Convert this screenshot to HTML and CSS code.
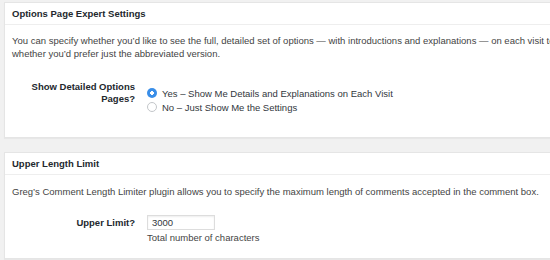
FILE: index.html
```html
<!DOCTYPE html>
<html>
<head>
<meta charset="utf-8">
<link rel="stylesheet" href="styles.css">
</head>
<body>
<div class="page">
  <section class="box box-first">
    <h2 class="box-title">Options Page Expert Settings</h2>
    <div class="box-body">
      <p class="intro">You can specify whether you’d like to see the full, detailed set of options — with introductions and explanations — on each visit to<br>whether you’d prefer just the abbreviated version.</p>
      <div class="row">
        <div class="row-label">Show Detailed Options Pages?</div>
        <div class="row-field radios">
          <label class="radio-line"><span class="radio radio-on"></span>Yes – Show Me Details and Explanations on Each Visit</label>
          <label class="radio-line"><span class="radio"></span>No – Just Show Me the Settings</label>
        </div>
      </div>
    </div>
  </section>
  <section class="box box-second">
    <h2 class="box-title">Upper Length Limit</h2>
    <div class="box-body">
      <p class="intro intro-second">Greg’s Comment Length Limiter plugin allows you to specify the maximum length of comments accepted in the comment box.</p>
      <div class="row row-limit">
        <div class="row-label label-limit">Upper Limit?</div>
        <div class="row-field">
          <div class="text-input">3000</div>
          <div class="hint">Total number of characters</div>
        </div>
      </div>
    </div>
  </section>
</div>
</body>
</html>
```

FILE: styles.css
```css
html, body {
  margin: 0;
  padding: 0;
  background: #f1f1f1;
}
body {
  width: 550px;
  height: 260px;
  overflow: hidden;
  font-family: "Liberation Sans", Arial, sans-serif;
  font-size: 9.5px;
  color: #444;
}
.page {
  padding: 2px 0 0 4px;
}
.box {
  width: 600px;
  background: #fff;
  border: 1px solid #e5e5e5;
  box-shadow: 0 1px 1px rgba(0,0,0,.04);
}
.box-second {
  margin-top: 14px;
}
.box-title {
  margin: 0;
  height: 21px;
  line-height: 21px;
  padding-left: 7px;
  font-size: 9.5px;
  font-weight: bold;
  color: #23282d;
  border-bottom: 1px solid #eee;
}
.box-body {
  padding: 0 7px 23px;
}
.box-second .box-body {
  padding-bottom: 14px;
}
.intro {
  margin: 9px 0 0;
  line-height: 13px;
}
.intro-second {
  margin-top: 10px;
}
.row {
  display: grid;
  grid-template-columns: 123px auto;
  column-gap: 12px;
  margin-top: 21px;
}
.row-limit {
  margin-top: 17px;
}
.row-label {
  text-align: right;
  font-weight: bold;
  color: #23282d;
  line-height: 12px;
  padding-left: 18px;
}
.label-limit {
  padding-top: 2px;
}
.radios {
  padding-top: 5px;
  display: flex;
  flex-direction: column;
}
.radio-line {
  display: flex;
  align-items: center;
  height: 14px;
  color: #32373c;
}
.radio {
  width: 10px;
  height: 10px;
  box-sizing: border-box;
  border-radius: 50%;
  border: 1px solid #c3c6c9;
  background: #fff;
  margin-right: 5px;
  flex: none;
}
.radio-on {
  border: none;
  background: radial-gradient(circle, #fff 0 1.6px, #3a8ee8 2.1px);
}
.text-input {
  width: 68px;
  height: 15px;
  box-sizing: border-box;
  border: 1px solid #ddd;
  box-shadow: inset 0 1px 2px rgba(0,0,0,.07);
  padding-left: 4px;
  line-height: 13px;
  color: #32373c;
}
.hint {
  line-height: 13px;
  margin-top: 1px;
  color: #444;
}
```
